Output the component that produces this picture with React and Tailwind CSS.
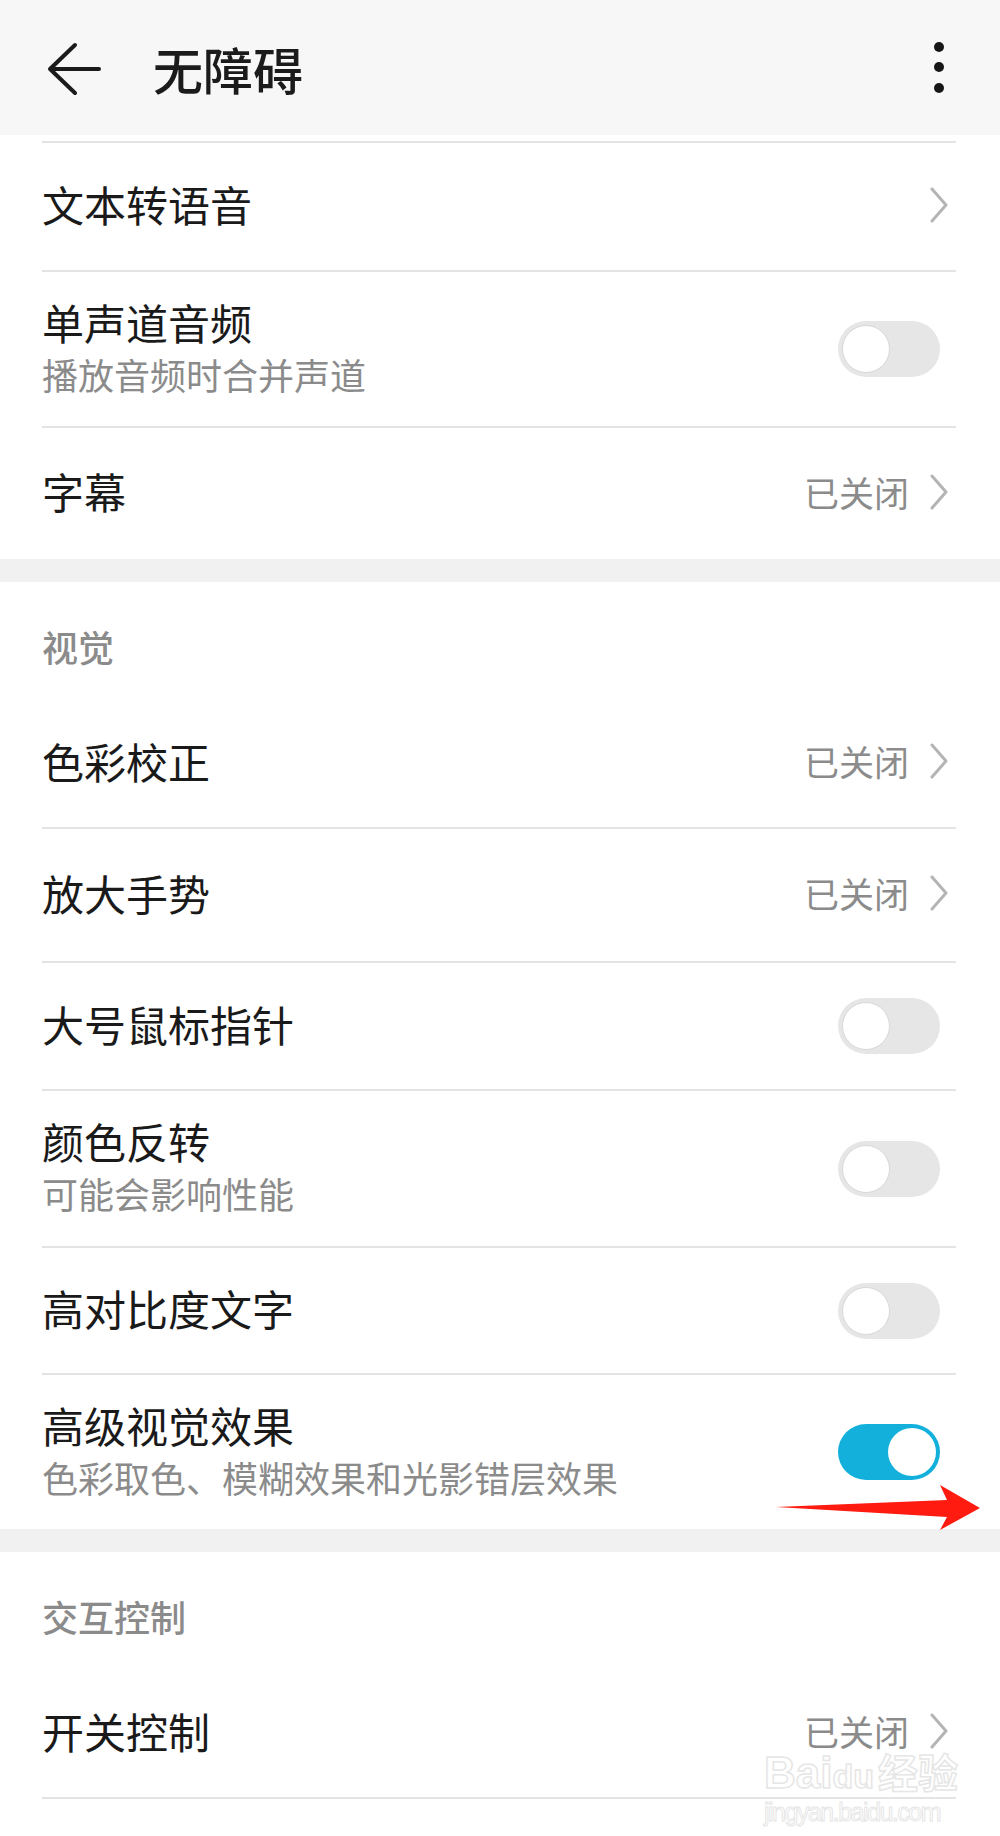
import React from 'react';

const cjk = "font-['Noto_Sans_CJK_SC','Noto_Sans',sans-serif]";

const sections = [
  {
    header: null,
    rows: [
      { title: '文本转语音', kind: 'link', h: 127 },
      { title: '单声道音频', sub: '播放音频时合并声道', kind: 'toggle', on: false, h: 154 },
      { title: '字幕', value: '已关闭', kind: 'link', h: 131, last: true },
    ],
  },
  {
    header: '视觉',
    rows: [
      { title: '色彩校正', value: '已关闭', kind: 'link', h: 128 },
      { title: '放大手势', value: '已关闭', kind: 'link', h: 132 },
      { title: '大号鼠标指针', kind: 'toggle', on: false, h: 126 },
      { title: '颜色反转', sub: '可能会影响性能', kind: 'toggle', on: false, h: 155 },
      { title: '高对比度文字', kind: 'toggle', on: false, h: 125 },
      { title: '高级视觉效果', sub: '色彩取色、模糊效果和光影错层效果', kind: 'toggle', on: true, h: 154, last: true },
    ],
  },
  {
    header: '交互控制',
    rows: [{ title: '开关控制', value: '已关闭', kind: 'link', h: 128 }],
  },
];

function Chevron() {
  return (
    <svg width="20" height="36" viewBox="0 0 20 36" className="mr-[7px] shrink-0">
      <path d="M3 2 L17 18 L3 34" fill="none" stroke="#b4b4b4" strokeWidth="3" strokeLinecap="round" strokeLinejoin="round" />
    </svg>
  );
}

function Toggle({ on }) {
  return (
    <div
      className={`mr-[16px] flex h-[56px] w-[102px] shrink-0 items-center rounded-full p-[4px] ${
        on ? 'justify-end bg-[#13b0dc]' : 'justify-start bg-[#e6e6e6]'
      }`}
    >
      <div className={`h-[48px] w-[48px] rounded-full bg-white ${on ? '' : 'border border-[#d8d8d8]'}`} />
    </div>
  );
}

function Row({ row }) {
  return (
    <div
      className={`flex items-center justify-between ${row.last ? '' : 'border-b-2 border-[#e4e4e4]'}`}
      style={{ height: row.h + (row.last ? 0 : 2) }}
    >
      <div className="mb-[5px] flex flex-col">
        <span className="text-[42px] leading-[44px] text-[#1a1a1a]">{row.title}</span>
        {row.sub && <span className="mt-[10px] text-[36px] leading-[40px] text-[#8b8b8b]">{row.sub}</span>}
      </div>
      {row.kind === 'toggle' ? (
        <Toggle on={row.on} />
      ) : (
        <div className="mb-[4px] flex items-center">
          {row.value && <span className="mr-[20px] text-[35px] leading-[40px] text-[#8b8b8b]">{row.value}</span>}
          <Chevron />
        </div>
      )}
    </div>
  );
}

export default function App() {
  return (
    <div className={`relative h-[1836px] w-[1000px] overflow-hidden bg-white ${cjk}`}>
      <div className="flex h-[135px] items-center bg-[#f7f7f7] pl-[45px] pr-[55px]">
        <svg width="58" height="54" viewBox="0 0 58 54" className="mt-[3px] shrink-0">
          <path d="M30 3 L5 27 L30 51 M5 27 L54 27" fill="none" stroke="#1b1b1b" strokeWidth="4" strokeLinecap="round" strokeLinejoin="round" />
        </svg>
        <h1 className="ml-[50px] text-[50px] font-medium leading-[54px] text-[#1b1b1b]">无障碍</h1>
        <svg width="12" height="54" viewBox="0 0 12 54" className="ml-auto shrink-0">
          <circle cx="6" cy="6" r="5" fill="#161616" />
          <circle cx="6" cy="26" r="5" fill="#161616" />
          <circle cx="6" cy="47" r="5" fill="#161616" />
        </svg>
      </div>

      {sections.map((section, i) => (
        <div key={i}>
          {i > 0 && <div className="h-[23px] bg-[#f1f1f1]" />}
          <div className="ml-[42px] mr-[44px]">
            {section.header ? (
              <div className="h-[117px] pt-[46px] text-[36px] font-medium leading-[36px] text-[#8b8b8b]">{section.header}</div>
            ) : (
              <div className="h-[8px] border-b-2 border-[#e4e4e4]" />
            )}
            {section.rows.map((row) => (
              <Row key={row.title} row={row} />
            ))}
          </div>
        </div>
      ))}

      {/* red annotation arrow */}
      <svg className="absolute left-[770px] top-[1480px]" width="215" height="56" viewBox="770 1480 215 56">
        <polygon points="776,1507 947,1500 940,1485 980,1508 940,1530 947,1517" fill="#ff1b0f" />
      </svg>

      {/* baidu watermark */}
      <div className="absolute left-[764px] top-[1750px] flex flex-col items-start opacity-60">
        <span className="font-['Liberation_Sans',sans-serif] text-[44px] font-bold leading-[42px] text-transparent [-webkit-text-stroke:1.5px_#d6d6d6]">
          Bai<span className="text-[34px]">du</span>
          <span className={`${cjk} ml-[4px] text-[40px]`}>经验</span>
        </span>
        <span className="mt-[2px] font-['Liberation_Sans',sans-serif] text-[25px] leading-[26px] tracking-[-1.5px] text-transparent [-webkit-text-stroke:1px_#d6d6d6]">
          jingyan.baidu.com
        </span>
      </div>
    </div>
  );
}
